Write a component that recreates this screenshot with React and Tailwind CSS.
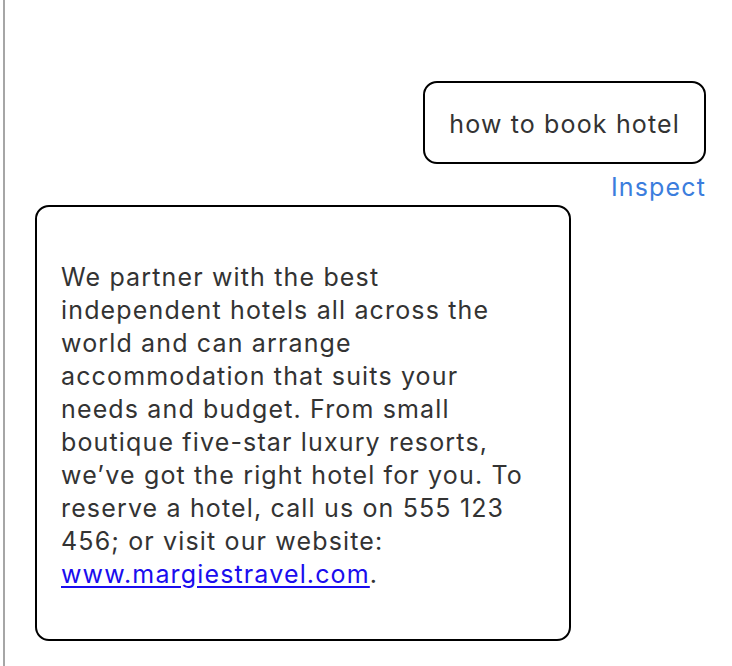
export default function App() {
  return (
    <div className="min-h-screen bg-white pl-[3px] font-['Inter','Liberation_Sans',sans-serif] text-[25px] tracking-[1.15px] text-[#333333]">
      <div className="min-h-screen border-l-2 border-[#a6a6a6] pt-[81px] pr-[26px]">
        <div className="flex flex-col items-end">
          <div className="rounded-[14px] border-2 border-black px-[24px] pt-[24px] pb-[21px] leading-[34px]">
            how to book hotel
          </div>
          <a className="mt-[7px] leading-[33px] text-[#3b7ddd]">Inspect</a>
        </div>

        <div className="ml-[30px] mt-[1px] w-[536px] rounded-[14px] border-2 border-black pl-[24px] pr-[40px] pt-[54px] pb-[48px] leading-[33px]">
          We partner with the best
          <br />
          independent hotels all across the
          <br />
          world and can arrange
          <br />
          accommodation that suits your
          <br />
          needs and budget. From small
          <br />
          boutique five-star luxury resorts,
          <br />
          we’ve got the right hotel for you. To
          <br />
          reserve a hotel, call us on 555 123
          <br />
          456; or visit our website:
          <br />
          <a className="text-[#1a0dee] underline underline-offset-[3px]">www.margiestravel.com</a>.
        </div>
      </div>
    </div>
  );
}
